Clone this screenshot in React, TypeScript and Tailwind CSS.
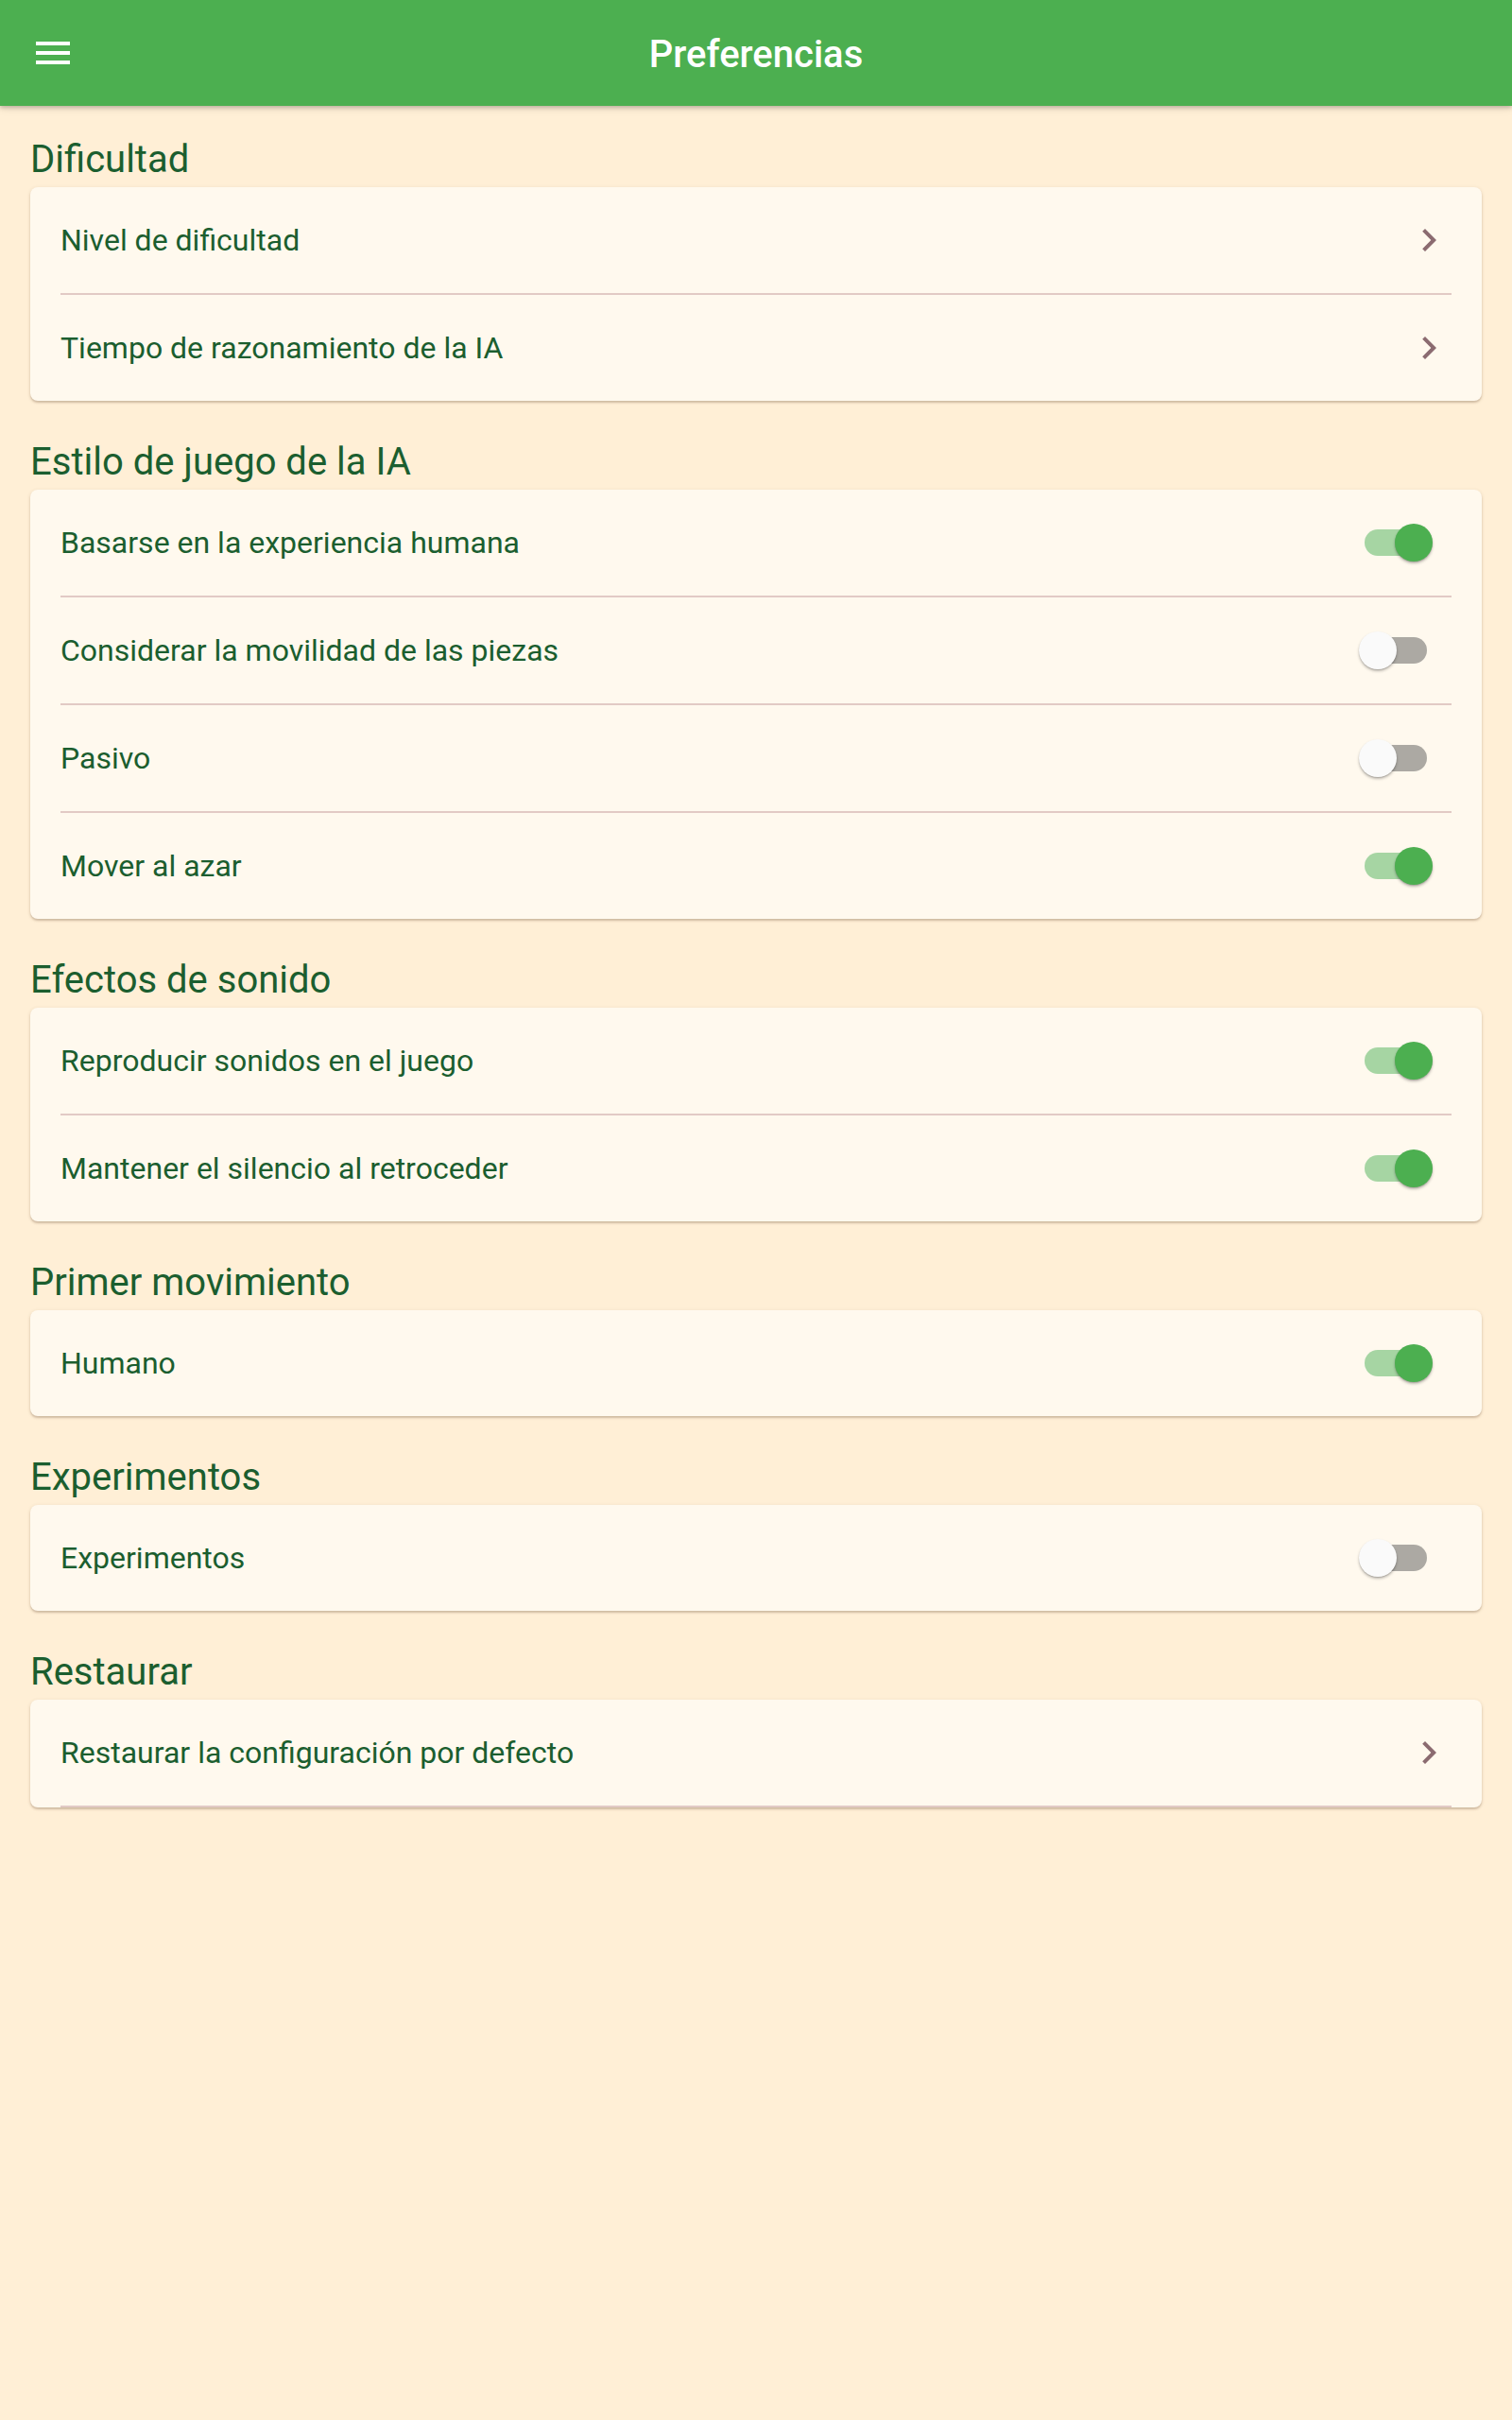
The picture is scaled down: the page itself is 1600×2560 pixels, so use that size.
import type { ReactNode } from "react";

type Item =
  | { label: string; kind: "link" }
  | { label: string; kind: "switch"; on: boolean };

type Section = {
  title: string;
  items: Item[];
  trailingDivider?: boolean;
};

const sections: Section[] = [
  {
    title: "Dificultad",
    items: [
      { label: "Nivel de dificultad", kind: "link" },
      { label: "Tiempo de razonamiento de la IA", kind: "link" },
    ],
  },
  {
    title: "Estilo de juego de la IA",
    items: [
      { label: "Basarse en la experiencia humana", kind: "switch", on: true },
      { label: "Considerar la movilidad de las piezas", kind: "switch", on: false },
      { label: "Pasivo", kind: "switch", on: false },
      { label: "Mover al azar", kind: "switch", on: true },
    ],
  },
  {
    title: "Efectos de sonido",
    items: [
      { label: "Reproducir sonidos en el juego", kind: "switch", on: true },
      { label: "Mantener el silencio al retroceder", kind: "switch", on: true },
    ],
  },
  {
    title: "Primer movimiento",
    items: [{ label: "Humano", kind: "switch", on: true }],
  },
  {
    title: "Experimentos",
    items: [{ label: "Experimentos", kind: "switch", on: false }],
  },
  {
    title: "Restaurar",
    items: [{ label: "Restaurar la configuración por defecto", kind: "link" }],
    trailingDivider: true,
  },
];

function MenuIcon() {
  return (
    <svg width="48" height="48" viewBox="0 0 24 24" fill="#ffffff">
      <path d="M3 18h18v-2H3v2zm0-5h18v-2H3v2zm0-7v2h18V6H3z" />
    </svg>
  );
}

function Chevron() {
  return (
    <svg width="48" height="48" viewBox="0 0 24 24" fill="#8b6b70">
      <path d="M10 6L8.59 7.41 13.17 12l-4.58 4.59L10 18l6-6z" />
    </svg>
  );
}

function Toggle({ on }: { on: boolean }) {
  // 98px box: track 1444..1510, thumb slides between the track ends
  return (
    <div className="relative h-[40px] w-[98px] shrink-0">
      <div
        className={
          on
            ? "absolute left-[6px] top-[6px] h-[28px] w-[66px] rounded-full bg-[#a6d5a3]"
            : "absolute left-[6px] top-[6px] h-[28px] w-[66px] rounded-full bg-[#aca9a3]"
        }
      />
      <div
        className={
          on
            ? "absolute left-[38px] top-0 h-[40px] w-[40px] rounded-full bg-[#4caf50] shadow-[0_2px_3px_rgba(0,0,0,0.25),0_1px_1px_rgba(0,0,0,0.12)]"
            : "absolute left-0 top-0 h-[40px] w-[40px] rounded-full bg-[#fafafa] shadow-[0_2px_3px_rgba(0,0,0,0.25),0_1px_1px_rgba(0,0,0,0.12)]"
        }
      />
    </div>
  );
}

function Row({ item }: { item: Item }) {
  return (
    <div className="flex h-[112px] items-center pl-[32px] pr-[32px]">
      <span className="flex-1 text-[32px] leading-[37px] text-[#1b5e2f]">{item.label}</span>
      {item.kind === "link" ? <Chevron /> : <Toggle on={item.on} />}
    </div>
  );
}

function Divider() {
  return <div className="mx-[32px] h-[2px] bg-[#e2cac5]" />;
}

function Card({ children }: { children: ReactNode }) {
  return (
    <div className="mx-[32px] mb-[8px] mt-[6px] overflow-hidden rounded-[8px] bg-[#fff9ee] shadow-[0_2px_2px_rgba(90,60,30,0.22),0_1px_4px_rgba(90,60,30,0.12)]">
      {children}
    </div>
  );
}

export default function App() {
  return (
    <div className="min-h-screen bg-[#ffefd6] font-['Roboto',sans-serif]">
      <header className="relative z-10 grid h-[112px] grid-cols-[112px_1fr_112px] items-center bg-[#4caf50] shadow-[0_2px_4px_rgba(0,0,0,0.2),0_4px_8px_rgba(0,0,0,0.08)]">
        <div className="pl-[32px]">
          <MenuIcon />
        </div>
        <h1 className="pt-[2px] text-center text-[40px] font-medium leading-[47px] text-white">
          Preferencias
        </h1>
        <div />
      </header>

      <main>
        {sections.map((section) => (
          <section key={section.title} className="pt-[33px]">
            <h2 className="px-[32px] text-[40px] leading-[47px] text-[#1b5e2f]">{section.title}</h2>
            <Card>
              {section.items.map((item, i) => (
                <div key={item.label}>
                  {i > 0 && <Divider />}
                  <Row item={item} />
                </div>
              ))}
              {section.trailingDivider && <Divider />}
            </Card>
          </section>
        ))}
      </main>
    </div>
  );
}
